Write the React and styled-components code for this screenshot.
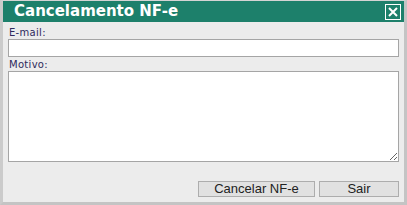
import React from "react";
import styled, { createGlobalStyle } from "styled-components";

const GlobalStyle = createGlobalStyle`
  html, body {
    margin: 0;
    padding: 0;
    background: #ffffff;
  }
`;

const Window = styled.div`
  width: 407px;
  height: 205px;
  box-sizing: border-box;
  display: flex;
  flex-flow: column;
  background-color: #ececec;
  border-top: 1px solid #d4d4d4;
  border-left: 3px solid #cbcbcb;
  border-right: 3px solid #c4c4c4;
  border-bottom: 3px solid #c4c4c4;
  font-family: "DejaVu Sans", Verdana, sans-serif;
`;

const TitleBar = styled.div`
  height: 21px;
  flex: none;
  display: flex;
  align-items: center;
  justify-content: space-between;
  padding: 0 3px 0 11px;
  background-color: #1d806b;
  color: #ffffff;

  h1 {
    margin: 0;
    font-size: 15px;
    font-weight: bold;
    line-height: 21px;
  }
`;

const CloseButton = styled.button`
  width: 16px;
  height: 16px;
  padding: 0;
  margin: 0;
  box-sizing: border-box;
  border: 1px solid #ffffff;
  background: transparent;
  display: flex;
  align-items: center;
  justify-content: center;
  cursor: pointer;
`;

const Body = styled.div`
  display: flex;
  flex-flow: column;
  padding: 4px 5px 0 5px;
`;

const Label = styled.label`
  display: block;
  font-size: 10px;
  line-height: 13px;
  color: #2e2a5c;
  padding-left: 1px;
  letter-spacing: 0.3px;
`;

const Input = styled.input`
  display: block;
  width: 100%;
  height: 18px;
  box-sizing: border-box;
  margin: 0 0 1px 0;
  border: 1px solid #a5a5a5;
  background: #ffffff;
  outline: none;
`;

const TextArea = styled.textarea`
  display: block;
  width: 100%;
  height: 91px;
  box-sizing: border-box;
  margin: 0;
  border: 1px solid #a5a5a5;
  background: #ffffff;
  resize: vertical;
  outline: none;
`;

const Footer = styled.div`
  display: flex;
  justify-content: flex-end;
  gap: 4px;
  padding: 19px 5px 0 0;
`;

const Button = styled.button`
  width: ${({ w }) => w}px;
  height: 16px;
  box-sizing: border-box;
  padding: 0;
  border: 1px solid #adadad;
  background-color: #e1e1e1;
  color: #222222;
  font-family: "Liberation Sans", Arial, sans-serif;
  font-size: 13px;
  line-height: 14px;
  cursor: pointer;
`;

export default function App() {
  return (
    <>
      <GlobalStyle />
      <Window>
        <TitleBar>
          <h1>Cancelamento NF-e</h1>
          <CloseButton aria-label="Fechar">
            <svg width="10" height="10" viewBox="0 0 10 10">
              <path d="M1 1 L9 9 M9 1 L1 9" stroke="#ffffff" strokeWidth="2" />
            </svg>
          </CloseButton>
        </TitleBar>
        <Body>
          <Label>E-mail:</Label>
          <Input type="text" />
          <Label>Motivo:</Label>
          <TextArea />
        </Body>
        <Footer>
          <Button w={117}>Cancelar NF-e</Button>
          <Button w={80}>Sair</Button>
        </Footer>
      </Window>
    </>
  );
}
